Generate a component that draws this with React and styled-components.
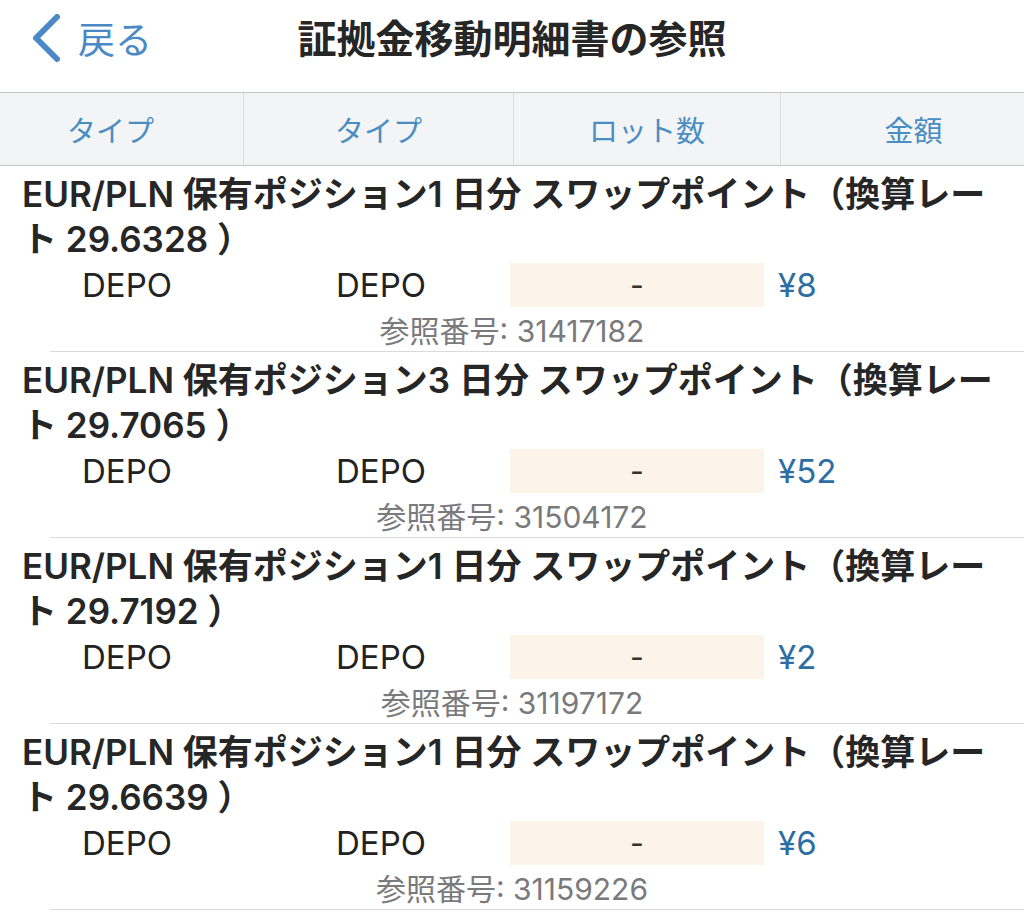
import React from "react";
import styled, { createGlobalStyle } from "styled-components";

const GlobalStyle = createGlobalStyle`
  body {
    margin: 0;
    background: #ffffff;
    font-family: "Inter", "Noto Sans CJK JP", sans-serif;
    color: #222;
  }
`;

const Page = styled.div`
  width: 1024px;
  height: 912px;
  overflow: hidden;
  background: #fff;
`;

const NavBar = styled.div`
  height: 72px;
  padding-bottom: 20px;
  display: flex;
  align-items: center;
  justify-content: center;
  position: relative;
  border-bottom: 1px solid #c6c6c8;
`;

const BackButton = styled.div`
  position: absolute;
  left: 32px;
  top: 0;
  height: 76px;
  display: flex;
  align-items: center;
  gap: 18px;
  color: #4a89c5;
  font-size: 37px;
`;

const Title = styled.h1`
  margin: 0;
  font-size: 39px;
  font-weight: 700;
  color: #262626;
`;

const HeaderRow = styled.div`
  display: grid;
  grid-template-columns: 243px 270px 267px 1fr;
  height: 72px;
  background: #f3f4f6;
  border-bottom: 1px solid #c9c9cb;
`;

const HeaderCell = styled.div`
  display: flex;
  align-items: center;
  justify-content: center;
  padding-left: ${(p) => p.pl || 0}px;
  padding-right: ${(p) => p.pr || 0}px;
  color: #4a8dc2;
  font-size: 29px;
  border-left: ${(p) => (p.first ? "none" : "1px solid #dcdcde")};
`;

const Item = styled.div`
  padding-top: 6px;
`;

const ItemTitle = styled.div`
  padding: 0 30px 0 22px;
  font-size: 35px;
  font-weight: 600;
  line-height: 45px;
  color: #262626;
`;

const DataRow = styled.div`
  display: grid;
  grid-template-columns: 242px 268px 254px 1fr;
  height: 44px;
  margin-top: 1px;
  align-items: center;
  font-size: 33px;
`;

const Cell = styled.div`
  text-align: ${(p) => p.align || "center"};
  padding-left: ${(p) => p.pl || 0}px;
  color: ${(p) => (p.amount ? "#2c6ea3" : "#222")};
`;

const LotBox = styled.div`
  height: 44px;
  background: #fdf4e9;
  display: flex;
  align-items: center;
  justify-content: center;
  font-size: 30px;
  color: #333;
`;

const RefLine = styled.div`
  height: 44px;
  display: flex;
  align-items: center;
  justify-content: center;
  font-size: 30px;
  color: #7a7a7c;
`;

const Separator = styled.div`
  margin-left: 50px;
  border-bottom: 1px solid #dadadc;
`;

const items = [
  { days: 1, rate: "29.6328", amount: "¥8", ref: "31417182" },
  { days: 3, rate: "29.7065", amount: "¥52", ref: "31504172" },
  { days: 1, rate: "29.7192", amount: "¥2", ref: "31197172" },
  { days: 1, rate: "29.6639", amount: "¥6", ref: "31159226" },
];

export default function App() {
  return (
    <Page>
      <GlobalStyle />
      <NavBar>
        <BackButton>
          <svg width="28" height="48" viewBox="0 0 28 48">
            <polyline
              points="25,3 4,24 25,45"
              fill="none"
              stroke="#4a89c5"
              strokeWidth="6"
              strokeLinecap="round"
              strokeLinejoin="round"
            />
          </svg>
          <span>戻る</span>
        </BackButton>
        <Title>証拠金移動明細書の参照</Title>
      </NavBar>
      <HeaderRow>
        <HeaderCell first pr={22}>タイプ</HeaderCell>
        <HeaderCell>タイプ</HeaderCell>
        <HeaderCell>ロット数</HeaderCell>
        <HeaderCell pl={22}>金額</HeaderCell>
      </HeaderRow>
      {items.map((it) => (
        <Item key={it.ref}>
          <ItemTitle>
            EUR/PLN 保有ポジション{it.days} 日分 スワップポイント（換算レート {it.rate} ）
          </ItemTitle>
          <DataRow>
            <Cell pl={12}>DEPO</Cell>
            <Cell pl={10}>DEPO</Cell>
            <LotBox>-</LotBox>
            <Cell align="left" pl={14} amount>
              {it.amount}
            </Cell>
          </DataRow>
          <RefLine>参照番号: {it.ref}</RefLine>
          <Separator />
        </Item>
      ))}
    </Page>
  );
}
